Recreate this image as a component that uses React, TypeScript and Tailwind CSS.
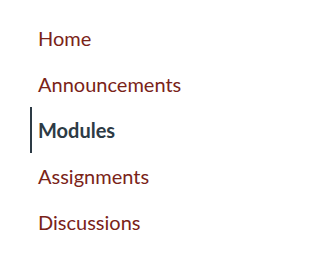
const items = [
  { title: "Home", active: false },
  { title: "Announcements", active: false },
  { title: "Modules", active: true },
  { title: "Assignments", active: false },
  { title: "Discussions", active: false },
];

export default function App() {
  return (
    <div className="w-[211px] h-[261px] bg-white pt-[15px] pl-[30px] font-['Lato',sans-serif]">
      <ul className="flex flex-col">
        {items.map((item) => (
          <li key={item.title}>
            <a
              href="#"
              className={
                item.active
                  ? "flex items-center h-[46px] border-l-2 border-[#2d3b45] pl-[6px] text-[20px] font-bold text-[#2d3b45]"
                  : "flex items-center h-[46px] border-l-2 border-transparent pl-[6px] text-[20px] text-[#7a2318]"
              }
            >
              {item.title}
            </a>
          </li>
        ))}
      </ul>
    </div>
  );
}
